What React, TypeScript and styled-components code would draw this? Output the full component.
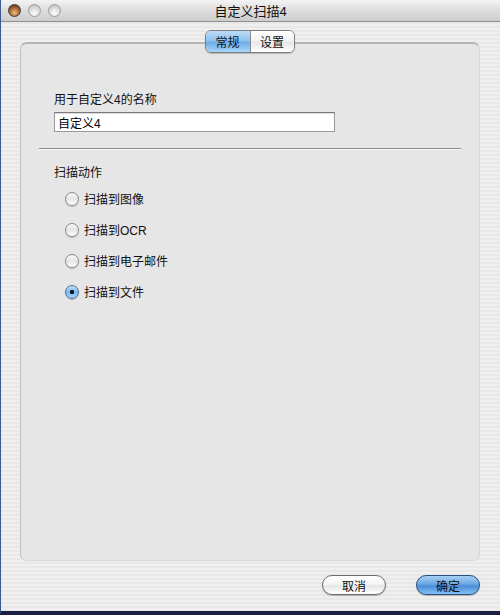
import React, { useState } from 'react';
import styled, { createGlobalStyle } from 'styled-components';

const GlobalStyle = createGlobalStyle`
  html, body { margin: 0; padding: 0; background: #1c2040; }
  body { font-family: 'Liberation Sans', 'Noto Sans CJK SC', sans-serif; }
`;

const CJK = `'Liberation Sans', 'Noto Sans CJK SC', sans-serif`;

const Window = styled.div`
  width: 500px;
  height: 615px;
  box-sizing: border-box;
  display: flex;
  flex-direction: column;
  border-left: 1px solid #3a5a90;
  border-bottom: 4px solid #1c2040;
  background: repeating-linear-gradient(
    to bottom,
    #efefef 0px,
    #efefef 2px,
    #e8e8e8 2px,
    #e8e8e8 4px
  );
  font-family: ${CJK};
`;

const TitleBar = styled.div`
  height: 22px;
  flex: none;
  display: flex;
  align-items: center;
  position: relative;
  background: linear-gradient(to bottom, #f4f4f4 0%, #dcdcdc 50%, #cdcdcd 100%);
  border-bottom: 1px solid #8e8e8e;
  border-top-right-radius: 5px;
  box-sizing: border-box;
`;

const Lights = styled.div`
  display: flex;
  gap: 7px;
  padding-left: 7px;
`;

const Light = styled.div<{ $graphite?: boolean }>`
  width: 13px;
  height: 13px;
  border-radius: 50%;
  box-sizing: border-box;
  border: 1px solid ${(p) => (p.$graphite ? '#4a3a2a' : '#9c9c9c')};
  background: ${(p) =>
    p.$graphite
      ? 'radial-gradient(circle at 50% 70%, #f0c080 0%, #b07040 45%, #3a2a20 100%)'
      : 'radial-gradient(circle at 50% 75%, #ffffff 0%, #e0e0e0 45%, #b8b8b8 100%)'};
`;

const Title = styled.div`
  position: absolute;
  left: 0;
  right: 0;
  text-align: center;
  font-size: 13px;
  color: #111;
  pointer-events: none;
`;

const Body = styled.div`
  flex: 1;
  display: flex;
  flex-direction: column;
  padding: 8px 20px 0 19px;
`;

const TabRow = styled.div`
  display: flex;
  justify-content: center;
  position: relative;
  z-index: 1;
  margin-bottom: -11px;
  padding-right: 1px;
`;

const TabGroup = styled.div`
  display: flex;
  height: 21px;
  border: 1px solid #7d7d7d;
  border-radius: 6px;
  overflow: hidden;
  box-shadow: 0 1px 1px rgba(0, 0, 0, 0.2);
`;

const Tab = styled.button<{ $active?: boolean }>`
  width: 44px;
  border: none;
  margin: 0;
  padding: 0;
  font-family: ${CJK};
  font-size: 12px;
  color: #111;
  cursor: default;
  background: ${(p) =>
    p.$active
      ? 'linear-gradient(to bottom, #bcdcf8 0%, #8ec2ee 48%, #6aaae6 52%, #a8d6fa 100%)'
      : 'linear-gradient(to bottom, #ffffff 0%, #f2f2f2 48%, #e6e6e6 52%, #ffffff 100%)'};
  & + & {
    border-left: 1px solid #8a8a8a;
  }
`;

const Panel = styled.div`
  height: 519px;
  box-sizing: border-box;
  background: #e6e6e6;
  border-radius: 7px;
  border-top: 2px solid #b4b4b4;
  border-left: 1px solid #c2c2c2;
  border-right: 1px solid #d6d6d6;
  border-bottom: 1px solid #d8d8d8;
  padding: 49px 18px 0 18px;
  display: flex;
  flex-direction: column;
`;

const NameSection = styled.div`
  padding-left: 15px;
  display: flex;
  flex-direction: column;
  align-items: flex-start;
`;

const ActionSection = styled.div`
  margin: 16px 0 0 15px;
  display: flex;
  flex-direction: column;
  align-items: flex-start;
`;

const Label = styled.div`
  font-size: 12px;
  line-height: 14px;
  color: #111;
`;

const TextField = styled.input`
  margin-top: 5px;
  width: 281px;
  height: 20px;
  box-sizing: border-box;
  border: 1px solid #9a9a9a;
  border-top-color: #7a7a7a;
  box-shadow: inset 0 1px 1px rgba(0, 0, 0, 0.15);
  background: #fff;
  font-family: ${CJK};
  font-size: 12px;
  padding: 0 3px;
  outline: none;
`;

const Divider = styled.div`
  margin-top: 16px;
  height: 1px;
  background: #8c8c8c;
  border-bottom: 1px solid #f6f6f6;
`;

const RadioList = styled.div`
  display: flex;
  flex-direction: column;
  gap: 16px;
  margin: 11px 0 0 11px;
`;

const RadioRow = styled.label`
  display: flex;
  align-items: center;
  gap: 5px;
  height: 15px;
  font-size: 12px;
  color: #111;
`;

const RadioDot = styled.span<{ $on?: boolean }>`
  width: 14px;
  height: 14px;
  border-radius: 50%;
  box-sizing: border-box;
  border: 1px solid ${(p) => (p.$on ? '#4a6f98' : '#8a8a8a')};
  background: ${(p) =>
    p.$on
      ? 'radial-gradient(circle at 50% 50%, #0e1c30 0px, #0e1c30 2px, transparent 2.5px), linear-gradient(to bottom, #c4e0fa 0%, #7cb6ea 50%, #a8d4fa 100%)'
      : 'linear-gradient(to bottom, #f8f8f8 0%, #e4e4e4 50%, #ffffff 100%)'};
  box-shadow: 0 1px 1px rgba(0, 0, 0, 0.2);
  flex: none;
`;

const Footer = styled.div`
  flex: 1;
  display: flex;
  justify-content: flex-end;
  align-items: center;
  gap: 30px;
  padding-bottom: 2px;
`;

const PushButton = styled.button<{ $primary?: boolean }>`
  width: 64px;
  height: 20px;
  border-radius: 10px;
  border: 1px solid ${(p) => (p.$primary ? '#2c4e7c' : '#6c6c6c')};
  font-family: ${CJK};
  font-size: 12px;
  color: #111;
  padding: 0;
  cursor: default;
  box-shadow: 0 1px 1px rgba(0, 0, 0, 0.25);
  background: ${(p) =>
    p.$primary
      ? 'linear-gradient(to bottom, #a8d0f4 0%, #6aa6e2 45%, #4a8cd8 55%, #80c0f4 100%)'
      : 'linear-gradient(to bottom, #ffffff 0%, #f4f4f4 45%, #e6e6e6 55%, #ffffff 100%)'};
`;

const options = ['扫描到图像', '扫描到OCR', '扫描到电子邮件', '扫描到文件'];

export default function App() {
  const [tab, setTab] = useState(0);
  const [choice, setChoice] = useState(3);
  const [name, setName] = useState('自定义4');

  return (
    <>
      <GlobalStyle />
      <Window>
        <TitleBar>
          <Lights>
            <Light $graphite />
            <Light />
            <Light />
          </Lights>
          <Title>自定义扫描4</Title>
        </TitleBar>
        <Body>
          <TabRow>
            <TabGroup>
              <Tab $active={tab === 0} onClick={() => setTab(0)}>常规</Tab>
              <Tab $active={tab === 1} onClick={() => setTab(1)}>设置</Tab>
            </TabGroup>
          </TabRow>
          <Panel>
            <NameSection>
              <Label>用于自定义4的名称</Label>
              <TextField value={name} onChange={(e) => setName(e.target.value)} />
            </NameSection>
            <Divider />
            <ActionSection>
              <Label>扫描动作</Label>
              <RadioList>
                {options.map((o, i) => (
                  <RadioRow key={o} onClick={() => setChoice(i)}>
                    <RadioDot $on={choice === i} />
                    {o}
                  </RadioRow>
                ))}
              </RadioList>
            </ActionSection>
          </Panel>
          <Footer>
            <PushButton>取消</PushButton>
            <PushButton $primary>确定</PushButton>
          </Footer>
        </Body>
      </Window>
    </>
  );
}
